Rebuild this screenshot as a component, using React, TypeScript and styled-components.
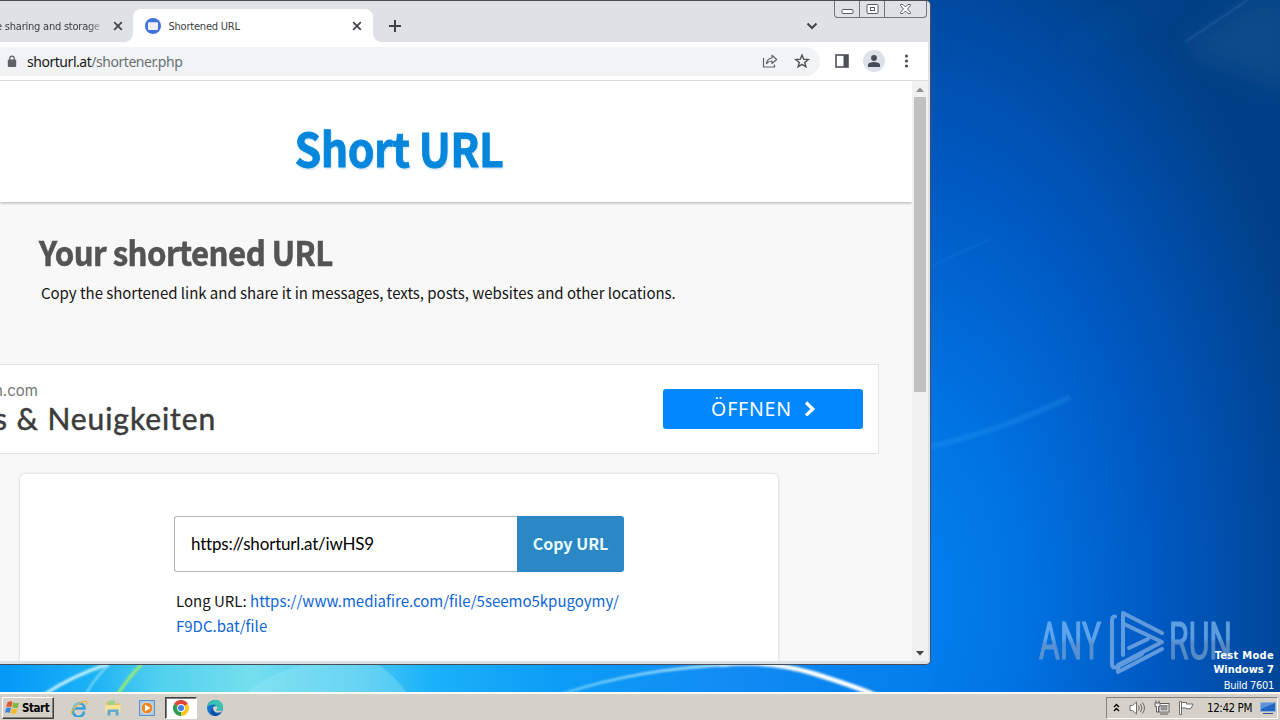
import React from 'react';
import styled, { createGlobalStyle } from 'styled-components';

const ui = `'DejaVu Sans Condensed', 'DejaVu Sans', sans-serif`;
const body = `'Noto Sans CJK SC', 'Noto Sans', sans-serif`;

const GlobalStyle = createGlobalStyle`
  * { box-sizing: border-box; }
  body { margin: 0; overflow: hidden; font-family: ${ui}; }
  svg { display: block; flex: none; }
`;

const Desktop = styled.div`
  position: relative;
  width: 1280px;
  height: 720px;
  display: flex;
  flex-direction: column;
  justify-content: space-between;
  overflow: hidden;
  background: #0058bf;
`;

const Wallpaper = styled.svg`
  position: absolute;
  inset: 0;
`;

const BrowserWindow = styled.section`
  position: relative;
  width: 931px;
  height: 665px;
  display: flex;
  flex-direction: column;
  padding: 0 2px 3px 0;
  background: #dee1e6;
  border: solid #4a4d58;
  border-width: 1px 1px 1px 0;
  border-radius: 0 5px 5px 0;
`;

const TabStrip = styled.header`
  height: 41px;
  display: flex;
  align-items: flex-start;
  padding-top: 8px;
  font-size: 11px;
  color: #3c4043;
`;

const Tab = styled.div<{ $active?: boolean }>`
  position: relative;
  width: ${p => (p.$active ? 240 : 133)}px;
  height: 33px;
  display: flex;
  align-items: center;
  justify-content: space-between;
  padding: 0 10px 0 ${p => (p.$active ? 12 : 0)}px;
  background: ${p => (p.$active ? '#fff' : 'transparent')};
  border-radius: 8px 8px 0 0;

  &::before, &::after {
    content: '';
    display: ${p => (p.$active ? 'block' : 'none')};
    position: absolute;
    bottom: 0;
    width: 8px;
    height: 8px;
  }
  &::before { left: -8px; background: radial-gradient(circle at 0 0, transparent 7.5px, #fff 8px); }
  &::after { right: -8px; background: radial-gradient(circle at 100% 0, transparent 7.5px, #fff 8px); }
`;

const TabTitle = styled.span<{ $fade?: boolean }>`
  display: flex;
  align-items: center;
  gap: 7.5px;
  padding-top: 1px;
  white-space: nowrap;
  letter-spacing: -0.22px;
  ${p => p.$fade && `
    width: 108px;
    margin-left: -4px;
    overflow: hidden;
    mask-image: linear-gradient(90deg, #000 86%, transparent);
  `}
`;

const CloseSlot = styled.span<{ $shift?: number }>`
  margin-right: ${p => p.$shift || 0}px;
`;

const NewTab = styled.span`
  padding: 10px 0 0 15px;
`;

const TabSearch = styled.span`
  margin: 13px 110px 0 auto;
`;

const Caption = styled.div`
  position: absolute;
  top: 0;
  right: 3px;
  height: 17px;
  display: flex;
  border: 1px solid #70757f;
  border-top: 0;
  border-radius: 0 0 4px 4px;
`;

const CaptionButton = styled.span<{ $w: number }>`
  width: ${p => p.$w}px;
  display: flex;
  justify-content: center;
  & + & { border-left: 1px solid #70757f; }
`;

const Toolbar = styled.div`
  height: 39px;
  flex: none;
  display: flex;
  align-items: center;
  background: #fff;
  border-bottom: 1px solid #dadce0;
`;

const Omnibox = styled.div`
  width: 820px;
  height: 29px;
  display: flex;
  align-items: center;
  padding: 0 10px 0 7px;
  background: #f1f3f4;
  border-radius: 0 15px 15px 0;
`;

const Address = styled.span`
  margin-left: 10px;
  flex: 1;
  font: 14px 'Noto Sans', sans-serif;
  letter-spacing: -0.46px;
  color: #6b7075;
  b { font-weight: 400; color: #17181a; }
`;

const OmniActions = styled.span`
  display: flex;
  gap: 16px;
`;

const ToolbarActions = styled.div`
  display: flex;
  align-items: center;
  gap: 14px;
  padding-left: 15px;
`;

const Avatar = styled.span`
  width: 22px;
  height: 22px;
  display: grid;
  place-items: center;
  border-radius: 50%;
  background: #dde1ea;
`;

const Viewport = styled.div`
  flex: 1;
  min-height: 0;
  display: flex;
  background: #f8f8f8;
`;

const Page = styled.main`
  width: 912px;
  overflow: hidden;
  font-family: ${body};
`;

const Banner = styled.div`
  height: 121px;
  display: flex;
  justify-content: center;
  align-items: center;
  padding: 11px 0 0 0;
  margin-bottom: 26px;
  background: #fff;
  box-shadow: 0 1px 3px rgba(0, 0, 0, 0.3);
`;

const Brand = styled.span`
  margin-right: 115px;
  font-size: 46px;
  line-height: 60px;
  font-weight: 700;
  letter-spacing: -0.6px;
  transform: scaleX(0.933);
  -webkit-text-stroke: 0.8px #0386db;
  color: #0386db;
  text-shadow: 1px 2px 2px #cfe3f2;
`;

const Intro = styled.section`
  height: 136px;
  padding-left: 39px;
`;

const Heading = styled.h1`
  margin: 0;
  font-size: 34px;
  line-height: 48px;
  padding-bottom: 2px;
  letter-spacing: -0.6px;
  transform: scaleX(0.918);
  transform-origin: 0 0;
  -webkit-text-stroke: 0.6px #545454;
  color: #545454;
`;

const Lead = styled.p`
  margin: 0 0 0 2px;
  font-size: 15px;
  line-height: 29px;
  letter-spacing: -0.03px;
  white-space: nowrap;
  color: #151515;
`;

const Ad = styled.aside`
  width: 879px;
  height: 90px;
  display: flex;
  justify-content: space-between;
  align-items: center;
  padding-right: 15px;
  background: #fff;
  border: 1px solid #e3e3e3;
  border-left: 0;
`;

const AdCopy = styled.div`
  margin-left: -6px;
  white-space: nowrap;
`;

const AdSite = styled.div`
  padding-top: 1px;
  font: 15px/18px Inter, sans-serif;
  color: #757575;
`;

const AdTitle = styled.div`
  font: 30px/37px Lato, sans-serif;
  letter-spacing: 0.93px;
  -webkit-text-stroke: 0.5px #3c3c3c;
  color: #3c3c3c;
`;

const AdButton = styled.span`
  width: 200px;
  height: 40px;
  display: flex;
  align-items: center;
  justify-content: center;
  gap: 12px;
  padding: 0 0 2px 1px;
  border-radius: 3px;
  background: #0387ff;
  color: #fff;
  font: 19.5px 'Noto Sans', sans-serif;
  letter-spacing: 0.8px;
`;

const Card = styled.section`
  width: 758px;
  height: 210px;
  margin: 20px 0 0 20px;
  padding: 42px 154px;
  background: #fff;
  border-radius: 5px;
  box-shadow: 0 0 3px rgba(0, 0, 0, 0.2);
`;

const CopyRow = styled.div`
  width: 450px;
  height: 56px;
  display: flex;
`;

const UrlField = styled.span`
  flex: 1;
  display: flex;
  align-items: center;
  padding: 0 0 2px 16px;
  border: 1px solid #b5b5b5;
  border-right: 0;
  border-radius: 3px 0 0 3px;
  font: 17px Lato, sans-serif;
  letter-spacing: -0.18px;
  color: #000;
`;

const CopyButton = styled.span`
  width: 107px;
  display: grid;
  place-items: center;
  padding-bottom: 2px;
  border-radius: 0 3px 3px 0;
  background: #2c87c5;
  color: #e9fbff;
  font-size: 16px;
  font-weight: 700;
  white-space: nowrap;
`;

const LongUrl = styled.p`
  margin: 16px 0 0 2px;
  font-size: 15px;
  line-height: 25px;
  color: #151515;
  white-space: nowrap;
  a { color: #0d66d8; }
`;

const Scrollbar = styled.div`
  width: 16px;
  display: flex;
  flex-direction: column;
  align-items: center;
  background: #f1f1f1;
`;

const ScrollThumb = styled.div`
  width: 12px;
  height: 295px;
  margin-bottom: auto;
  background: #c1c1c1;
`;

const ArrowSlot = styled.span`
  height: 16px;
  display: grid;
  place-items: center;
`;

const Watermark = styled.svg`
  position: absolute;
  left: 1036px;
  top: 606px;
`;

const BuildInfo = styled.div`
  position: absolute;
  right: 6px;
  top: 649px;
  text-align: right;
  color: #fff;
  font-size: 11px;
  line-height: 14px;
  div:last-child { line-height: 17px; letter-spacing: -0.3px; }
`;

const Strong = styled.div<{ $track?: number }>`
  font-weight: 700;
  letter-spacing: ${p => p.$track || 0}px;
`;

const Taskbar = styled.footer`
  position: relative;
  height: 28px;
  display: flex;
  align-items: center;
  padding: 1px 2px 0;
  background: #d5d0c8;
  border-top: 2px solid #fbf9f4;
`;

const StartButton = styled.span`
  width: 52px;
  height: 22px;
  display: flex;
  align-items: center;
  gap: 2px;
  padding-left: 2px;
  border: 1px solid;
  border-color: #fff #404040 #404040 #fff;
  box-shadow: inset -1px -1px #808080;
  font-size: 11.5px;
  font-weight: 700;
  letter-spacing: -0.45px;
  color: #000;
`;

const QuickLaunch = styled.div`
  display: flex;
  padding-left: 9px;
`;

const TaskItem = styled.span<{ $open?: boolean }>`
  width: 32px;
  height: 22px;
  margin-right: 2px;
  display: grid;
  place-items: center;
  ${p => p.$open && `
    background: #fff;
    border: 1px solid;
    border-color: #404040 #fff #fff #404040;
    box-shadow: inset 1px 1px #808080;
  `}
`;

const Tray = styled.div`
  margin-left: auto;
  height: 22px;
  width: 172px;
  display: flex;
  align-items: center;
  padding-left: 6px;
  gap: 8px;
  border: 1px solid;
  border-color: #808080 #fff #fff #808080;
  font-size: 11.5px;
  letter-spacing: -0.42px;
  white-space: nowrap;
  color: #000;
`;

const Clock = styled.span`
  margin-left: 3px;
`;

const Cross = () => (
  <svg width="10" height="10" viewBox="0 0 10 10" stroke="#3f4247" strokeWidth="1.7">
    <path d="M1.2 1.2l7.6 7.6M8.8 1.2L1.2 8.8" />
  </svg>
);

const WallpaperArt = () => (
  <Wallpaper width="1280" height="720">
    <defs>
      <radialGradient id="sky" gradientUnits="userSpaceOnUse" cx="0" cy="0" r="1" gradientTransform="translate(900 600) scale(430 720)">
        <stop offset="0" stopColor="#0483f1" />
        <stop offset="0.3" stopColor="#0072e1" />
        <stop offset="0.6" stopColor="#0059c2" />
        <stop offset="0.85" stopColor="#00499f" />
        <stop offset="1.000" stopColor="#014086" />
      </radialGradient>
      <linearGradient id="strip" gradientUnits="userSpaceOnUse" x1="0" x2="931" y1="0" y2="0">
        <stop offset="0" stopColor="#0498f8" />
        <stop offset="0.1" stopColor="#1cb2f6" />
        <stop offset="0.17" stopColor="#50d0ee" />
        <stop offset="0.27" stopColor="#74dfee" />
        <stop offset="0.38" stopColor="#4fcaf4" />
        <stop offset="0.46" stopColor="#1cb2f8" />
        <stop offset="0.6" stopColor="#0c9cf7" />
        <stop offset="0.78" stopColor="#128cf3" />
        <stop offset="1" stopColor="#037deb" />
      </linearGradient>
      <linearGradient id="arc" gradientUnits="userSpaceOnUse" x1="560" x2="880" y1="0" y2="0">
        <stop offset="0" stopColor="#5cc6fa" />
        <stop offset="0.5" stopColor="#bfe8fd" />
        <stop offset="0.75" stopColor="#fff" />
      </linearGradient>
      <filter id="soft"><feGaussianBlur stdDeviation="0.9" /></filter>
      <filter id="haze"><feGaussianBlur stdDeviation="12" /></filter>
    </defs>
    <rect x="900" width="380" height="720" fill="url(#sky)" />
    <rect y="655" width="931" height="40" fill="url(#strip)" />
    <path d="M245 694Q270 670 325 660H372Q395 675 408 694Z" fill="#9be8f4" fillOpacity="0.35" />
    <g fill="none" filter="url(#soft)">
      <path d="M45 694Q72 676 108 664" stroke="#c4f2fb" strokeWidth="3" />
      <path d="M86 694Q96 676 110 664" stroke="#a4eafa" strokeWidth="1.5" />
      <path d="M118 694Q128 678 142 664" stroke="#a2ec6c" strokeWidth="3" />
      <path d="M562 694Q640 668 735 664.500" stroke="url(#arc)" strokeWidth="2.500" />
      <path d="M720 665Q770 660 812 673T878 696" stroke="url(#arc)" strokeWidth="4.500" />
      <path d="M930 447Q1000 431 1070 397" stroke="#35a0f6" strokeOpacity="0.24" strokeWidth="6" />
      <path d="M932 266L990 239" stroke="#3aa5ee" strokeOpacity="0.2" strokeWidth="1.500" />
      <path d="M1185 42L1248 0" stroke="#4f8fc6" strokeOpacity="0.4" strokeWidth="1.500" />
    </g>
    <path d="M1180 50L1250 0H1290V90Z" fill="#2f6c94" fillOpacity="0.22" filter="url(#haze)" />
    <path d="M1060 50L1150 0H1180L1080 50Z" fill="#2b74b4" fillOpacity="0.15" filter="url(#haze)" />
  </Wallpaper>
);

const BrandMark = () => (
  <Watermark width="200" height="72" viewBox="0 0 200 72" opacity="0.66">
    <defs>
      <linearGradient id="mark" gradientUnits="userSpaceOnUse" x1="0" y1="14" x2="0" y2="54">
        <stop offset="0.45" stopColor="#8fc4f6" />
        <stop offset="0.6" stopColor="#84a6cf" />
      </linearGradient>
    </defs>
    <g fill="url(#mark)" stroke="url(#mark)" strokeWidth="1.200" fontFamily="Roboto, sans-serif" fontSize="52">
      <text x="3" y="53" textLength="62" lengthAdjust="spacingAndGlyphs">ANY</text>
      <text x="133" y="53" textLength="63" lengthAdjust="spacingAndGlyphs">RUN</text>
    </g>
    <g fill="none" stroke="#93bbe8" strokeWidth="4" strokeLinejoin="round" strokeLinecap="round">
      <path d="M79 10.500Q76 10 76 15V58Q76 63 81 61L106 48" />
      <path d="M87 49V7L126 27M88 18L126 36L82 59V66L126 43M93 42L112 33" />
    </g>
  </Watermark>
);

export default function App() {
  return (
    <Desktop>
      <GlobalStyle />
      <WallpaperArt />
      <BrowserWindow>
        <TabStrip>
          <Tab>
            <TabTitle $fade>e sharing and storage m</TabTitle>
            <Cross />
          </Tab>
          <Tab $active>
            <TabTitle>
              <svg width="16" height="16" viewBox="0 0 16 16">
                <circle cx="8" cy="8" r="8" fill="#3f73dc" />
                <rect x="3" y="4.200" width="10" height="7.800" rx="1" fill="#f3eef6" />
              </svg>
              Shortened URL
            </TabTitle>
            <CloseSlot $shift={1}><Cross /></CloseSlot>
          </Tab>
          <NewTab>
            <svg width="14" height="14" viewBox="0 0 14 14" stroke="#3f4247" strokeWidth="2">
              <path d="M7 1v12M1 7h12" />
            </svg>
          </NewTab>
          <TabSearch>
            <svg width="12" height="8" viewBox="0 0 12 8" fill="none" stroke="#3f4247" strokeWidth="2">
              <path d="M1.500 1.500L6 6l4.500-4.500" />
            </svg>
          </TabSearch>
        </TabStrip>
        <Caption>
          <CaptionButton $w={24}>
            <svg width="13" height="16" viewBox="0 0 13 16" fill="#fff" stroke="#555a66">
              <rect x="1" y="8.500" width="11" height="4" rx="1" />
            </svg>
          </CaptionButton>
          <CaptionButton $w={25}>
            <svg width="13" height="16" viewBox="0 0 13 16" fill="#fff" stroke="#555a66">
              <rect x="1" y="3.500" width="11" height="9" rx="1" />
              <rect x="4.500" y="6.500" width="4" height="3" />
            </svg>
          </CaptionButton>
          <CaptionButton $w={42}>
            <svg width="13" height="16" viewBox="0 0 13 16" fill="#fff" stroke="#555a66" strokeWidth="0.9">
              <path d="M1.500 3.500H4L6.500 6 9 3.500h2.500v1L8.500 8l3 3.500v1H9L6.500 10 4 12.500H1.500v-1L4.500 8l-3-3.500z" />
            </svg>
          </CaptionButton>
        </Caption>
        <Toolbar>
          <Omnibox>
            <svg width="10" height="13" viewBox="0 0 10 13">
              <rect x="0.800" y="4.500" width="8.400" height="7.500" rx="1" fill="#5f6368" />
              <path d="M2.800 5V3.300a2.200 2.200 0 014.400 0V5" fill="none" stroke="#5f6368" strokeWidth="1.300" />
            </svg>
            <Address><b>shorturl.at</b>/shortener.php</Address>
            <OmniActions>
              <svg width="16" height="16" viewBox="0 0 16 16" fill="none" stroke="#5f6368" strokeWidth="1.200">
                <path d="M1.500 5v9h11v-2.500" />
                <path d="M4.500 10.500C5 7 7 5.200 10 5V2.300l4.700 4.200L10 10.500V8C7.500 8 6 8.800 4.500 10.500z" strokeLinejoin="round" />
              </svg>
              <svg width="16" height="16" viewBox="0 0 16 16" fill="none" stroke="#4d5156" strokeWidth="1.400">
                <path d="M8 2l1.700 4.200 4.500.3-3.500 2.900 1.200 4.400L8 11.400l-3.900 2.400 1.200-4.400L1.800 6.500l4.500-.3z" />
              </svg>
            </OmniActions>
          </Omnibox>
          <ToolbarActions>
            <svg width="14" height="14" viewBox="0 0 14 14">
              <rect x="1" y="1" width="12" height="12" fill="#fff" stroke="#4d5156" strokeWidth="1.600" />
              <rect x="8.500" y="1" width="4.500" height="12" fill="#4d5156" />
            </svg>
            <Avatar>
              <svg width="12" height="12" viewBox="0 0 12 12" fill="#474d58">
                <circle cx="6" cy="3" r="2.900" />
                <path d="M0 12V9.800C0 8 3.500 7 6 7s6 1 6 2.800V12z" />
              </svg>
            </Avatar>
            <svg width="14" height="14" viewBox="0 0 14 14" fill="#4d5156">
              <circle cx="7.500" cy="2" r="1.600" /><circle cx="7.500" cy="7" r="1.600" /><circle cx="7.500" cy="12" r="1.600" />
            </svg>
          </ToolbarActions>
        </Toolbar>
        <Viewport>
          <Page>
            <Banner><Brand>Short URL</Brand></Banner>
            <Intro>
              <Heading>Your shortened URL</Heading>
              <Lead>Copy the shortened link and share it in messages, texts, posts, websites and other locations.</Lead>
            </Intro>
            <Ad>
              <AdCopy>
                <AdSite>n.com</AdSite>
                <AdTitle>s &amp; Neuigkeiten</AdTitle>
              </AdCopy>
              <AdButton>
                ÖFFNEN
                <svg width="12" height="16" viewBox="0 0 12 16" fill="none" stroke="#fff" strokeWidth="3.200">
                  <path d="M2 2.500L8.800 9 2 15.500" />
                </svg>
              </AdButton>
            </Ad>
            <Card>
              <CopyRow>
                <UrlField>https://shorturl.at/iwHS9</UrlField>
                <CopyButton>Copy URL</CopyButton>
              </CopyRow>
              <LongUrl>
                Long URL: <a>https://www.mediafire.com/file/5seemo5kpugoymy/<br />F9DC.bat/file</a>
              </LongUrl>
            </Card>
          </Page>
          <Scrollbar>
            <ArrowSlot><svg width="8" height="5" viewBox="0 0 8 5" fill="#8f8f8f"><path d="M0 5L4 0.500 8 5z" /></svg></ArrowSlot>
            <ScrollThumb />
            <ArrowSlot><svg width="8" height="5" viewBox="0 0 8 5" fill="#454545"><path d="M0 0L4 4.500 8 0z" /></svg></ArrowSlot>
          </Scrollbar>
        </Viewport>
      </BrowserWindow>
      <BrandMark />
      <BuildInfo>
        <Strong $track={0.3}>Test Mode</Strong>
        <Strong>Windows 7</Strong>
        <div>Build 7601</div>
      </BuildInfo>
      <Taskbar>
        <StartButton>
          <svg width="15" height="15" viewBox="0 0 15 15">
            <path d="M2.500 2.500Q5 .5 7.500 2L6.300 7Q4 5.800 1.200 7z" fill="#e0562a" />
            <path d="M8.300 2.500Q11 4 14 2.500L12.800 7.500Q10 8.800 7.100 7.300z" fill="#7cb843" />
            <path d="M1 8Q4 6.800 6 8L4.800 13Q2.500 11.500 0 12.800z" fill="#3b86d8" />
            <path d="M6.900 8.300Q9.500 9.800 12.500 8.500L11.300 13.300Q8.500 14.800 5.600 13.300z" fill="#f5bd2e" />
          </svg>
          Start
        </StartButton>
        <QuickLaunch>
          <TaskItem>
            <svg width="18" height="18" viewBox="0 0 18 18" fill="none">
              <path d="M14 12.500A5.500 5.500 0 113.800 9.500h10.700A5.500 5.500 0 009 4.200" stroke="#3aa0dc" strokeWidth="2.600" />
              <path d="M9 4.200A5.500 5.500 0 003.800 9.500" stroke="#6fc4ee" strokeWidth="2.600" />
              <path d="M2 15.500C-.5 12 11 .8 16.500 2.500c1 .8.200 2.500-.5 3.500" stroke="#e8b93a" strokeWidth="1.300" />
            </svg>
          </TaskItem>
          <TaskItem>
            <svg width="18" height="18" viewBox="0 0 18 18">
              <path d="M2 3h5l1 1.500h8V13H2z" fill="#e3c25c" />
              <path d="M4 1.500h7V6H4z" fill="#a4d08e" />
              <path d="M1.500 6h15v7.500h-15z" fill="#f6e391" />
              <path d="M3.500 16.500V10.500h11v6h-3v-3.500h-5v3.500z" fill="#5fa9d8" />
            </svg>
          </TaskItem>
          <TaskItem>
            <svg width="16" height="16" viewBox="0 0 16 16">
              <rect x="0.500" y="0.500" width="15" height="15" fill="#a9cbe8" stroke="#5f93c4" />
              <circle cx="8" cy="8" r="5.800" fill="#ef8420" stroke="#fff" strokeWidth="0.500" />
              <path d="M6 4.500L11.500 8 6 11.500z" fill="#fff" />
            </svg>
          </TaskItem>
          <TaskItem $open>
            <svg width="16" height="16" viewBox="0 0 16 16">
              <path d="M8 8L1.070 4A8 8 0 0114.930 4z" fill="#df4436" />
              <path d="M8 8L14.930 4A8 8 0 018 16z" fill="#f9c823" />
              <path d="M8 8V16A8 8 0 011.070 4z" fill="#2b9c4f" />
              <circle cx="8" cy="8" r="3.900" fill="#fff" /><circle cx="8" cy="8" r="3" fill="#3f7fe8" />
            </svg>
          </TaskItem>
          <TaskItem>
            <svg width="16" height="16" viewBox="0 0 16 16">
              <circle cx="8" cy="8" r="8" fill="#1673cc" />
              <path d="M.2 7.500C1 3 4.500 0 8.500 0 13 0 16 3.500 16 7c0 2.500-1.800 4-4 4-1.500 0-2.700-.6-2.500-1.500 1-1 1-4.500-3-5C3.500 4.400 1 5.800.2 7.500z" fill="#38c3b2" />
              <path d="M6 8c-1 4 3 7 8 4.500C12 15.500 9 16.500 6.500 15.500 3 13.500 3 9.500 6 8z" fill="#0f4f9f" />
              <path d="M9.500 9.500c1-1 .8-2.500 0-3.500-1.500-.3-3.200.6-3.500 2 0 2.500 2.500 4.800 5.500 4.500 1.500 0 2.500-.4 3-.8L16 8.500C15 11 12 11.500 9.500 10.500z" fill="#d5d0c8" />
            </svg>
          </TaskItem>
        </QuickLaunch>
        <Tray>
          <svg width="8" height="10" viewBox="0 0 8 10" fill="none" stroke="#000" strokeWidth="1.400">
            <path d="M1 4L3.500 1.500 6 4M1 8L3.500 5.500 6 8" />
          </svg>
          <svg width="17" height="16" viewBox="0 0 17 16" fill="#fff" stroke="#6d6d6d">
            <path d="M1 5.500h2.500L7.500 2v12l-4-3.500H1z" />
            <path d="M9.500 5.500q1.500 2.500 0 5M11.500 4q3 4 0 8M13.500 2.500q4 5.500 0 11" fill="none" />
          </svg>
          <svg width="17" height="16" viewBox="0 0 17 16" fill="#fff" stroke="#5c5c5c">
            <rect x="5" y="3.500" width="10" height="8.500" /><rect x="7" y="5.500" width="6" height="4.500" fill="#999" stroke="#888" />
            <path d="M6 14h8" />
            <path d="M1 3h5v3.500H4.500V12H2.500V6.500H1zM2 .5V3M5 .5V3" />
          </svg>
          <svg width="17" height="16" viewBox="0 0 17 16" fill="#fff" stroke="#6d6d6d">
            <path d="M0.500 1.500h2v13h-2z" /><path d="M2.500 2.500h5v1.500h6.500l-2 4.500-4.500.5v-1h-5z" />
          </svg>
          <Clock>12:42 PM</Clock>
          <svg width="16" height="14" viewBox="0 0 16 14">
            <rect x="0.500" y="1.500" width="15" height="9" fill="#2265c2" stroke="#8fb0d8" />
            <path d="M1 2h14L1 8z" fill="#5b93dc" /><path d="M3 12.500h10" stroke="#33527e" />
          </svg>
        </Tray>
      </Taskbar>
    </Desktop>
  );
}
